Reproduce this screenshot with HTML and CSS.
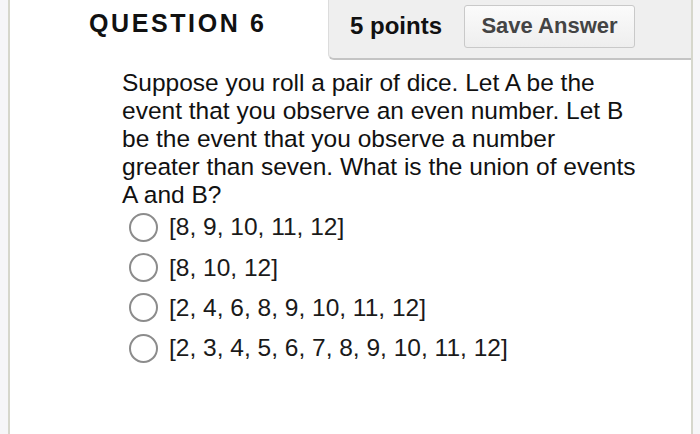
FILE: index.html
```html
<!DOCTYPE html>
<html>
<head>
<meta charset="utf-8">
<link rel="stylesheet" href="styles.css">
</head>
<body>
<div class="page">
  <div class="sheet">
    <div class="header">
      <h1 class="qtitle">QUESTION 6</h1>
      <div class="panel">
        <span class="points">5 points</span>
        <button class="save">Save Answer</button>
      </div>
    </div>
    <div class="body">
      <p class="prompt">Suppose you roll a pair of dice. Let A be the event that you observe an even number. Let B be the event that you observe a number<br>greater than seven. What is the union of events A and B?</p>
      <ul class="options">
        <li class="option"><span class="radio"></span><span class="label">[8, 9, 10, 11, 12]</span></li>
        <li class="option"><span class="radio"></span><span class="label">[8, 10, 12]</span></li>
        <li class="option"><span class="radio"></span><span class="label">[2, 4, 6, 8, 9, 10, 11, 12]</span></li>
        <li class="option"><span class="radio"></span><span class="label">[2, 3, 4, 5, 6, 7, 8, 9, 10, 11, 12]</span></li>
      </ul>
    </div>
  </div>
</div>
</body>
</html>
```
FILE: styles.css
```css
* { box-sizing: border-box; }
html, body { margin: 0; padding: 0; }
body {
  font-family: "Liberation Sans", Arial, sans-serif;
  background: #f6f6f8;
  width: 700px;
  height: 434px;
  overflow: hidden;
}
.page {
  padding: 0 7px 0 8px;
  height: 434px;
}
.sheet {
  background: #fff;
  border-left: 2px solid #d6d7cc;
  border-right: 2px solid #d6d7cc;
  height: 434px;
}
.header {
  display: flex;
  justify-content: space-between;
  height: 60px;
}
.qtitle {
  margin: 10px 0 0 79px;
  font-size: 25px;
  font-weight: bold;
  letter-spacing: 2.6px;
  color: #111;
  line-height: 26px;
}
.panel {
  width: 363px;
  height: 60px;
  background: #efefef;
  border-left: 1px solid #dcdcdc;
  border-bottom: 2px solid #c4c4c4;
  border-bottom-left-radius: 6px;
  display: flex;
  align-items: center;
  padding: 0 0 6px 21px;
}
.points {
  font-size: 24px;
  font-weight: bold;
  color: #111;
}
.save {
  margin-left: 22px;
  width: 171px;
  height: 43px;
  font-family: "Liberation Sans", Arial, sans-serif;
  font-size: 22px;
  font-weight: bold;
  color: #444;
  background: linear-gradient(#fbfbfb, #eeeeee);
  border: 1px solid #c9c9c9;
  border-radius: 3px;
  padding: 0;
}
.body {
  padding: 9px 0 0 112px;
}
.prompt {
  margin: 0;
  font-size: 24.5px;
  line-height: 28px;
  color: #111;
  width: 530px;
}
.options {
  list-style: none;
  margin: -2px 0 0 0;
  padding: 0 0 0 7px;
}
.option {
  display: flex;
  align-items: center;
  height: 40.4px;
}
.radio {
  width: 29px;
  height: 29px;
  border: 2.5px solid #8c8c8c;
  border-radius: 50%;
  background: #fff;
  flex: none;
}
.label {
  margin-left: 11px;
  font-size: 24.5px;
  color: #1a1a1a;
}
```
